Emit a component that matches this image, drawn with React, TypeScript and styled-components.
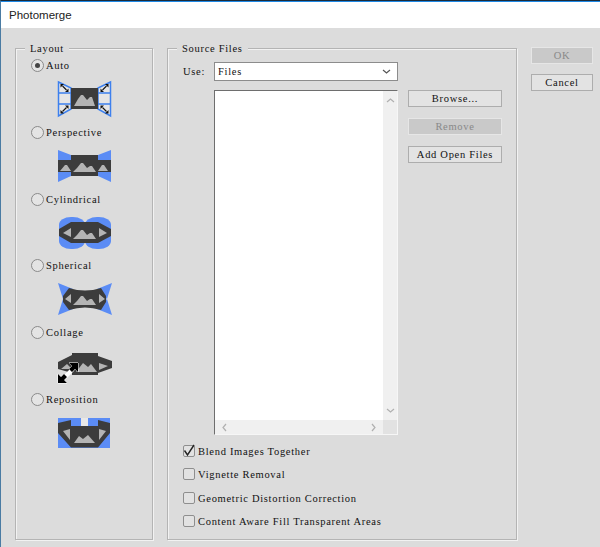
import styled, { createGlobalStyle } from "styled-components";

const GlobalStyle = createGlobalStyle`
  html, body {
    margin: 0;
    padding: 0;
    background: #dcdcdc;
  }
`;

const Dialog = styled.div`
  width: 600px;
  height: 547px;
  box-sizing: border-box;
  overflow: hidden;
  display: flex;
  flex-direction: column;
  background: #dcdcdc;
  border-top: 1px solid #1b2b3a;
  border-left: 1px solid #4a7ba3;
  font-family: "Liberation Serif", serif;
  font-size: 10.5px;
  letter-spacing: 0.7px;
  color: #111111;
`;

const TitleBar = styled.div`
  height: 27px;
  box-sizing: border-box;
  border-top: 1px solid #1e88e5;
  padding: 0 0 1px 8px;
  display: flex;
  align-items: center;
  background: #ffffff;
  font-family: "Liberation Sans", sans-serif;
  font-size: 11.5px;
  letter-spacing: 0;
  color: #222222;
`;

const Body = styled.div`
  flex: 1;
  display: flex;
  gap: 14px;
  padding: 20px 7px 7px 14px;
`;

const Group = styled.fieldset<{ $width: number }>`
  width: ${(p) => p.$width}px;
  box-sizing: border-box;
  height: 492px;
  margin: 0;
  padding: 0;
  border: 1px solid #b4b4b4;
  box-shadow: inset 1px 1px 0 #f2f2f2, 1px 1px 0 #f2f2f2;
  position: relative;
  flex: none;
`;

const Legend = styled.legend`
  position: absolute;
  top: -6px;
  left: 9px;
  padding: 0 5px;
  line-height: 12px;
  background: #dcdcdc;
`;

const LayoutList = styled.div`
  display: flex;
  flex-direction: column;
  padding: 10px 0 0 15px;
`;

const LayoutOption = styled.div`
  height: 66.8px;
  display: flex;
  flex-direction: column;
`;

const RadioRow = styled.label`
  display: flex;
  align-items: center;
  gap: 2px;
  height: 13px;
`;

const RadioMark = styled.span<{ $on?: boolean }>`
  width: 13px;
  height: 13px;
  box-sizing: border-box;
  border-radius: 50%;
  border: 1px solid #8a8a8a;
  background: #e4e4e4;
  display: flex;
  align-items: center;
  justify-content: center;
  &::after {
    content: "";
    width: 5px;
    height: 5px;
    border-radius: 50%;
    background: ${(p) => (p.$on ? "#444444" : "transparent")};
  }
`;

const PreviewWrap = styled.div`
  margin: 7px 0 0 26px;
  width: 56px;
  height: 38px;
  svg {
    display: block;
    overflow: visible;
  }
`;

const SourceGroup = styled.div`
  display: flex;
  flex-direction: column;
  padding: 13px 0 0 15px;
`;

const UseRow = styled.div`
  display: flex;
  align-items: center;
  height: 19px;
`;

const UseLabel = styled.span`
  width: 31px;
`;

const Select = styled.div`
  width: 184px;
  height: 19px;
  box-sizing: border-box;
  padding: 0 6px 0 3px;
  display: flex;
  align-items: center;
  justify-content: space-between;
  background: #ffffff;
  border: 1px solid #8c8c8c;
`;

const FilesRow = styled.div`
  display: flex;
  gap: 10px;
  margin: 9px 0 0 31px;
`;

const ListBox = styled.div`
  width: 184px;
  height: 345px;
  box-sizing: border-box;
  display: grid;
  grid-template-columns: 1fr 14px;
  grid-template-rows: 1fr 14px;
  background: #ffffff;
  border-style: solid;
  border-width: 1px;
  border-color: #6e6e6e #f6f6f6 #f6f6f6 #6e6e6e;
`;

const ListContent = styled.div`
  background: #ffffff;
`;

const ScrollV = styled.div`
  background: #f0f0f0;
  display: flex;
  flex-direction: column;
  justify-content: space-between;
  align-items: center;
  padding: 5px 0;
`;

const ScrollH = styled.div`
  background: #f0f0f0;
  display: flex;
  justify-content: space-between;
  align-items: center;
  padding: 0 5px;
`;

const ScrollCorner = styled.div`
  background: #e2e2e2;
`;

const SideButtons = styled.div`
  display: flex;
  flex-direction: column;
  gap: 11px;
`;

const Button = styled.div<{ $disabled?: boolean; $width: number }>`
  width: ${(p) => p.$width}px;
  height: 17px;
  box-sizing: border-box;
  display: flex;
  align-items: center;
  justify-content: center;
  border: 1px solid ${(p) => (p.$disabled ? "#e6e6e6" : "#adadad")};
  background: ${(p) => (p.$disabled ? "#c9c9c9" : "#e3e3e3")};
  color: ${(p) => (p.$disabled ? "#888888" : "#111111")};
`;

const Checks = styled.div`
  display: flex;
  flex-direction: column;
  margin-top: 10px;
`;

const CheckRow = styled.label`
  height: 23.4px;
  display: flex;
  align-items: flex-start;
  gap: 3px;
`;

const CheckBox = styled.span`
  width: 12px;
  height: 12px;
  box-sizing: border-box;
  border: 1px solid #8e8e8e;
  border-radius: 2px;
  background: #e2e2e2;
  display: flex;
  align-items: center;
  justify-content: center;
  svg {
    overflow: visible;
    flex: none;
  }
`;

const CheckText = styled.span`
  line-height: 13px;
`;

const Actions = styled.div`
  display: flex;
  flex-direction: column;
  gap: 10px;
  margin-top: -1px;
`;

const Chevron = ({ dir, color = "#b0b0b0" }: { dir: "up" | "down" | "left" | "right"; color?: string }) => {
  const d = {
    up: "M1 6 L4.5 3 L8 6",
    down: "M1 3 L4.5 6 L8 3",
    left: "M6 1 L3 4.5 L6 8",
    right: "M3 1 L6 4.5 L3 8",
  }[dir];
  return (
    <svg width="9" height="9" viewBox="0 0 9 9">
      <path d={d} fill="none" stroke={color} strokeWidth="1.2" />
    </svg>
  );
};

const BLUE = "#5b8cf5";
const DARK = "#3c3c3c";
const GREY = "#b4b4b4";

// the mountain shape shared by the previews
const Peaks = () => (
  <path d="M16 26 L20 22 L24 17 L26 17 L30 22 L33 20 L35 20 L39 26 Z" fill={GREY} />
);

// small double headed arrow on the corners of the Auto preview
const CornerArrow = ({ x, y, flip }: { x: number; y: number; flip?: boolean }) => (
  <g transform={`translate(${x} ${y}) ${flip ? "scale(-1 1)" : ""}`}>
    <path d="M-2 -2 L2 2" stroke="#111111" strokeWidth="1.1" />
    <path d="M-4 -4 L-0.5 -4 L-4 -0.5 Z M4 4 L0.5 4 L4 0.5 Z" fill="#111111" />
  </g>
);

const AutoPreview = () => (
  <svg width="56" height="38" viewBox="0 0 56 38">
    <path
      d="M1.5 3 L14 9 L14 30 L1.5 37 Z M53.5 3 L41 9 L41 30 L53.5 37 Z"
      fill="#e6e6e6"
      stroke="#3d80ee"
      strokeWidth="1.5"
    />
    <path d="M1.5 14 H14 M1.5 25 H14 M41 14 H53.5 M41 25 H53.5" stroke="#3d80ee" strokeWidth="1.3" />
    <rect x="14" y="9" width="27" height="21" fill={DARK} />
    <path d="M17 27 L21 20 L24 16 L26 16 L30 21 L33 18 L35 18 L38 27 Z" fill={GREY} />
    <CornerArrow x={7.5} y={9} />
    <CornerArrow x={47.5} y={9} flip />
    <CornerArrow x={7.5} y={30.5} flip />
    <CornerArrow x={47.5} y={30.5} />
  </svg>
);

const PerspectivePreview = () => (
  <svg width="56" height="38" viewBox="0 0 56 38">
    <path d="M1 4 L14 9 L14 30 L1 36 Z M54 4 L41 9 L41 30 L54 36 Z" fill={BLUE} />
    <rect x="1" y="14" width="53" height="12" fill={DARK} />
    <rect x="14" y="9" width="27" height="21" fill={DARK} />
    <Peaks />
    <path d="M3 25 L8 19 L10 19 L14 25 Z M41 25 L45 19 L47 19 L51 25 Z" fill={GREY} />
  </svg>
);

const CylindricalPreview = () => (
  <svg width="56" height="38" viewBox="0 0 56 38">
    <rect x="2" y="4" width="26" height="32" rx="12" ry="8" fill={BLUE} />
    <rect x="28" y="4" width="26" height="32" rx="12" ry="8" fill={BLUE} />
    <path d="M2 16 L14 9 L41 9 L54 16 L54 23 L41 30 L14 30 L2 23 Z" fill={DARK} />
    <Peaks />
    <path d="M6 20 L14 15 L14 24 Z M50 20 L42 15 L42 24 Z" fill={GREY} />
  </svg>
);

const SphericalPreview = () => (
  <svg width="56" height="38" viewBox="0 0 56 38">
    <path d="M1 4 L16 10 L6 20 Z M55 4 L40 10 L50 20 Z M1 36 L16 30 L6 20 Z M55 36 L40 30 L50 20 Z" fill={BLUE} />
    <path d="M12 9 Q28 14 44 9 L49 17 L49 23 L44 31 Q28 26 12 31 L6 23 L6 17 Z" fill={DARK} />
    <Peaks />
    <path d="M8 20 L14 15 L14 24 Z M48 20 L42 15 L42 24 Z" fill={GREY} />
  </svg>
);

const CollagePreview = () => (
  <svg width="56" height="38" viewBox="0 0 56 38">
    <path d="M1 16 L15 9 L15 7 L41 7 L41 10 L55 15 L55 22 L41 27 L41 29 L15 29 L15 27 L1 23 Z" fill={DARK} />
    <path d="M4 23 L10 18 L15 23 Z M42 24 L42 17 L51 20 Z" fill={GREY} />
    <path d="M19 26 L26 17 L31 21 L34 18 L40 26 Z" fill={GREY} />
    <path d="M7 32 L16 23" stroke="#ffffff" strokeWidth="4" />
    <path
      d="M21 17 L21 26 L18 23 L15 26 L12 23 L15 20 L12 17 Z M1 37 L1 28 L4 31 L7 28 L10 31 L7 34 L10 37 Z"
      fill="#000000"
      stroke="#ffffff"
      strokeWidth="1"
      paintOrder="stroke"
    />
  </svg>
);

const RepositionPreview = () => (
  <svg width="56" height="38" viewBox="0 0 56 38">
    <rect x="1" y="5" width="52" height="30" fill={BLUE} />
    <rect x="24" y="5" width="7" height="8" fill="#e8e8e8" />
    <path d="M1 10 L14 7 L14 13 L41 13 L41 7 L53 10 L53 20 L41 34.5 L14 34.5 L1 20 Z" fill={DARK} />
    <path d="M6 18 L13 16 L13 27 Z M49 18 L42 16 L42 27 Z" fill={GREY} />
    <path d="M17 30 L22 23 L26 26 L31 22 L38 30 Z" fill={GREY} />
  </svg>
);

const layouts = [
  { name: "Auto", preview: <AutoPreview />, on: true },
  { name: "Perspective", preview: <PerspectivePreview /> },
  { name: "Cylindrical", preview: <CylindricalPreview /> },
  { name: "Spherical", preview: <SphericalPreview /> },
  { name: "Collage", preview: <CollagePreview /> },
  { name: "Reposition", preview: <RepositionPreview /> },
];

const options = [
  { text: "Blend Images Together", checked: true },
  { text: "Vignette Removal" },
  { text: "Geometric Distortion Correction" },
  { text: "Content Aware Fill Transparent Areas" },
];

const App = () => (
  <>
    <GlobalStyle />
    <Dialog>
      <TitleBar>Photomerge</TitleBar>
      <Body>
        <Group $width={138}>
          <Legend>Layout</Legend>
          <LayoutList>
            {layouts.map((l) => (
              <LayoutOption key={l.name}>
                <RadioRow>
                  <RadioMark $on={l.on} />
                  {l.name}
                </RadioRow>
                <PreviewWrap>{l.preview}</PreviewWrap>
              </LayoutOption>
            ))}
          </LayoutList>
        </Group>
        <Group $width={350}>
          <Legend>Source Files</Legend>
          <SourceGroup>
            <UseRow>
              <UseLabel>Use:</UseLabel>
              <Select>
                Files
                <Chevron dir="down" color="#555555" />
              </Select>
            </UseRow>
            <FilesRow>
              <ListBox>
                <ListContent />
                <ScrollV>
                  <Chevron dir="up" />
                  <Chevron dir="down" />
                </ScrollV>
                <ScrollH>
                  <Chevron dir="left" />
                  <Chevron dir="right" />
                </ScrollH>
                <ScrollCorner />
              </ListBox>
              <SideButtons>
                <Button $width={94}>Browse...</Button>
                <Button $width={94} $disabled>Remove</Button>
                <Button $width={94}>Add Open Files</Button>
              </SideButtons>
            </FilesRow>
            <Checks>
              {options.map((o) => (
                <CheckRow key={o.text}>
                  <CheckBox>
                    {o.checked && (
                      <svg width="12" height="12" viewBox="0 0 12 12">
                        <path d="M1.5 5.5 L4.5 10 L11 0" fill="none" stroke="#222222" strokeWidth="1.4" />
                      </svg>
                    )}
                  </CheckBox>
                  <CheckText>{o.text}</CheckText>
                </CheckRow>
              ))}
            </Checks>
          </SourceGroup>
        </Group>
        <Actions>
          <Button $width={62} $disabled>OK</Button>
          <Button $width={62}>Cancel</Button>
        </Actions>
      </Body>
    </Dialog>
  </>
);

export default App;
